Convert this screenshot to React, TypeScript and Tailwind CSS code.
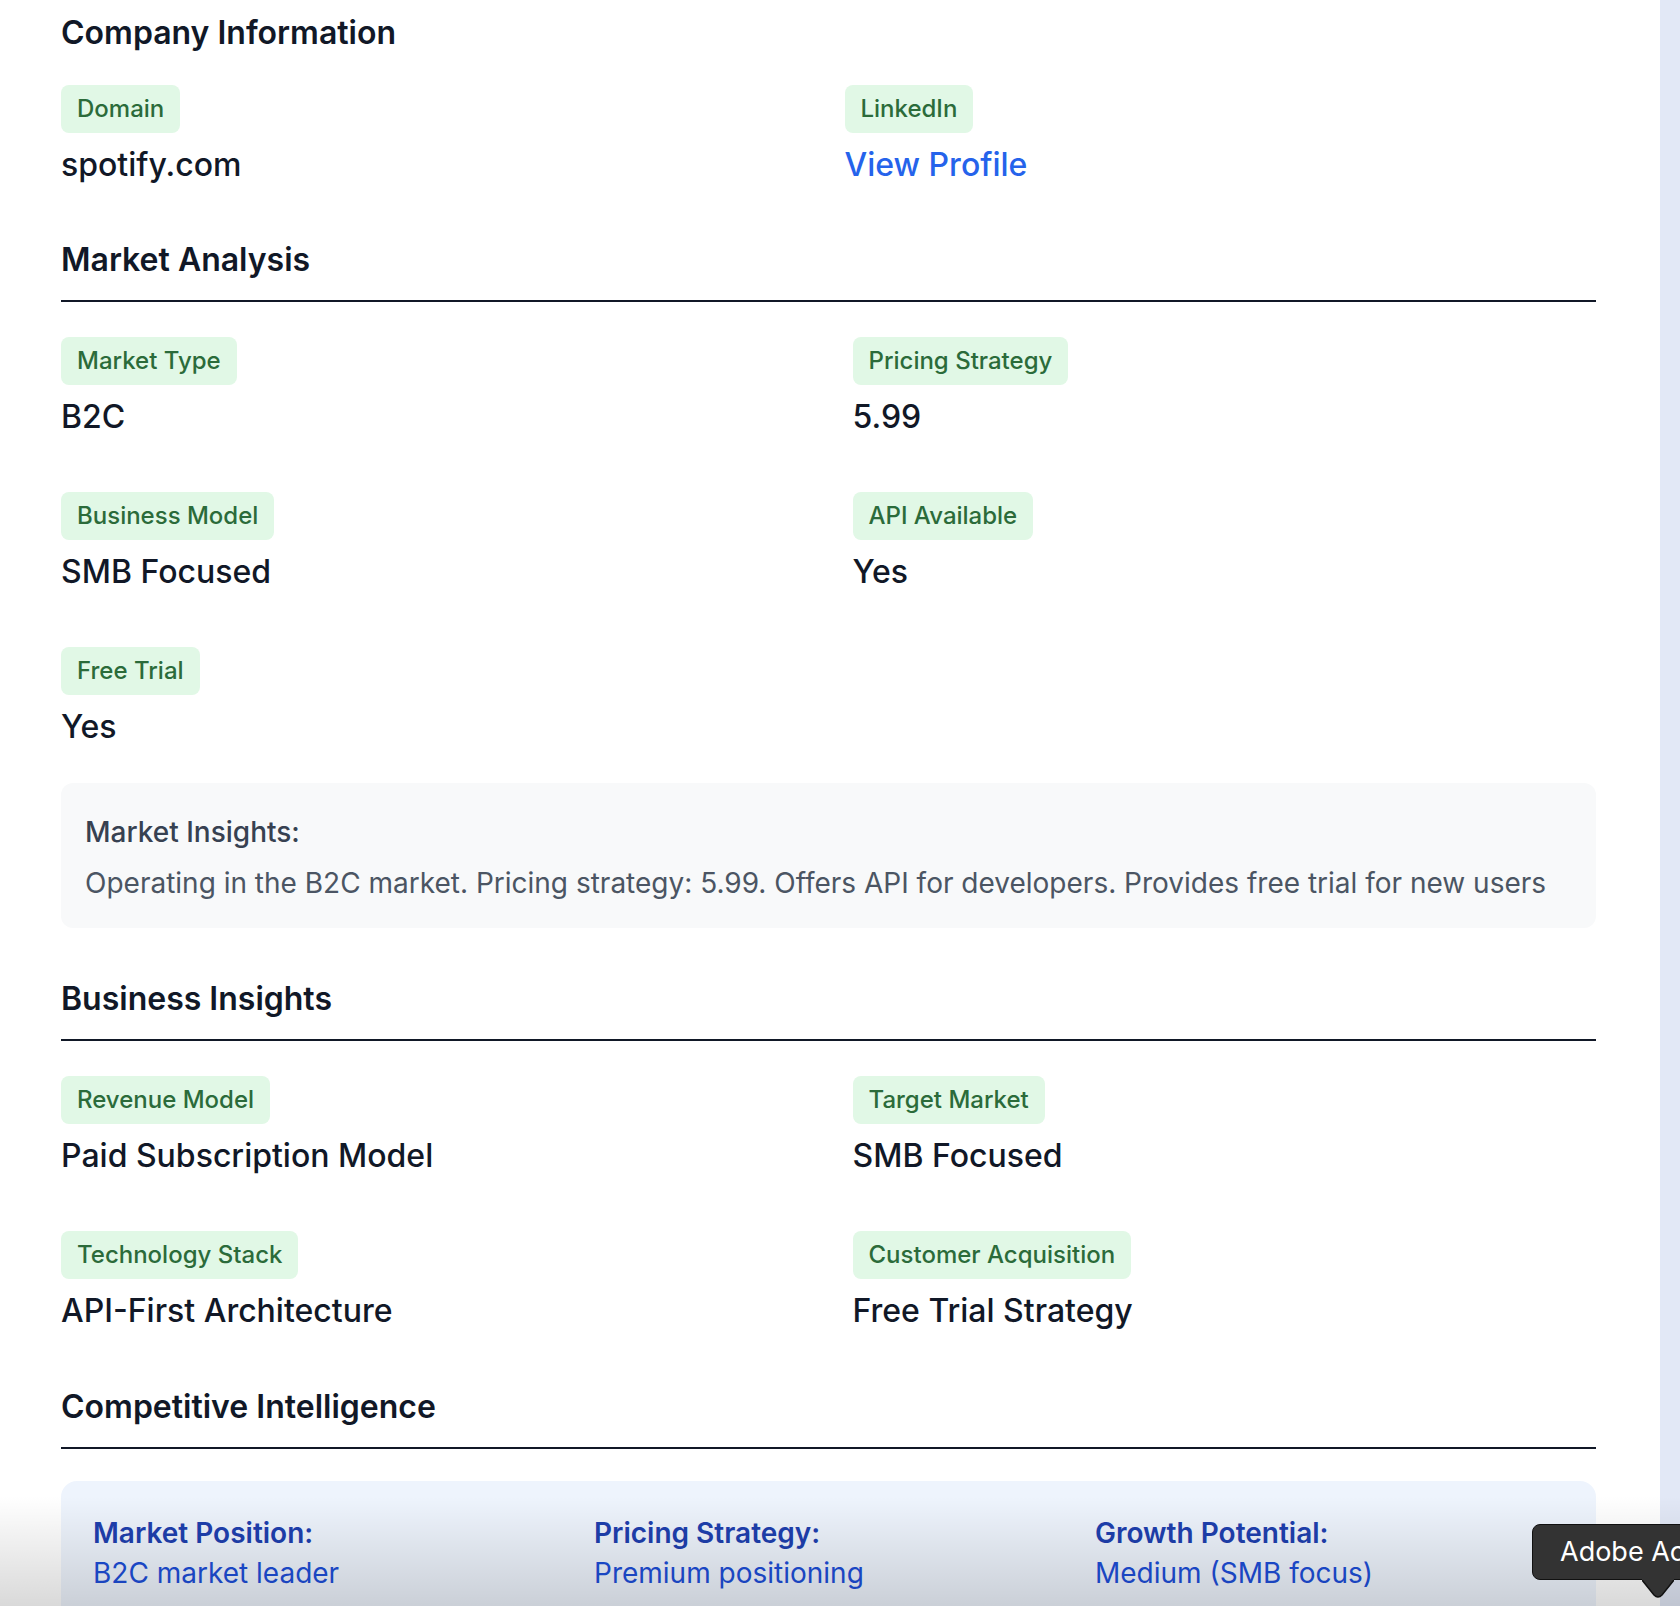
import React from "react";

function Badge({ children }: { children: React.ReactNode }) {
  return (
    <span className="inline-block rounded-lg bg-[#e1f8e6] px-4 py-2 text-[24px] leading-8 font-medium text-[#2b6b3a]">
      {children}
    </span>
  );
}

function Field({ label, value, link }: { label: string; value: string; link?: boolean }) {
  return (
    <div>
      <Badge>{label}</Badge>
      <div
        className={
          link
            ? "mt-[14px] text-[32px] leading-9 font-medium text-[#2563eb]"
            : "mt-[14px] text-[32px] leading-9 font-medium text-[#111827]"
        }
      >
        {value}
      </div>
    </div>
  );
}

function SectionHeading({ children, className }: { children: React.ReactNode; className: string }) {
  return (
    <div className={className}>
      <h2 className="border-b-2 border-[#111827] pb-5 text-[32px] leading-10 font-semibold text-[#111827]">
        {children}
      </h2>
    </div>
  );
}

export default function App() {
  return (
    <div className="relative flex h-[1606px] overflow-hidden bg-[#e2e8f6] font-['Inter',sans-serif]">
      <div className="w-[1660px] shrink-0 bg-white pt-[13px] pl-[61px] pr-[64px]">
        <h2 className="text-[32px] leading-10 font-semibold text-[#111827]">Company Information</h2>
        <div className="mt-8 grid grid-cols-2 gap-x-8">
          <Field label="Domain" value="spotify.com" />
          <Field label="LinkedIn" value="View Profile" link />
        </div>

        <SectionHeading className="mt-[57px]">Market Analysis</SectionHeading>
        <div className="mt-[35px] grid grid-cols-2 gap-x-12 gap-y-[57px]">
          <Field label="Market Type" value="B2C" />
          <Field label="Pricing Strategy" value="5.99" />
          <Field label="Business Model" value="SMB Focused" />
          <Field label="API Available" value="Yes" />
          <Field label="Free Trial" value="Yes" />
        </div>

        <div className="mt-[38px] rounded-xl bg-[#f8f9fa] px-6 pt-7 pb-6">
          <p className="mb-[9px] text-[28px] leading-[42px] font-medium text-[#374151]">Market Insights:</p>
          <p className="text-[28px] leading-[42px] text-[#4b5563]">
            Operating in the B2C market. Pricing strategy: 5.99. Offers API for developers. Provides free trial for new users
          </p>
        </div>

        <SectionHeading className="mt-[51px]">Business Insights</SectionHeading>
        <div className="mt-[35px] grid grid-cols-2 gap-x-12 gap-y-[57px]">
          <Field label="Revenue Model" value="Paid Subscription Model" />
          <Field label="Target Market" value="SMB Focused" />
          <Field label="Technology Stack" value="API-First Architecture" />
          <Field label="Customer Acquisition" value="Free Trial Strategy" />
        </div>

        <SectionHeading className="mt-[58px]">Competitive Intelligence</SectionHeading>
        <div className="mt-8 grid grid-cols-3 gap-8 rounded-2xl bg-[#eef4fd] p-8">
          <div>
            <p className="text-[28px] leading-10 font-semibold text-[#1e40af]">Market Position:</p>
            <p className="text-[28px] leading-10 text-[#1d4ed8]">B2C market leader</p>
          </div>
          <div>
            <p className="text-[28px] leading-10 font-semibold text-[#1e40af]">Pricing Strategy:</p>
            <p className="text-[28px] leading-10 text-[#1d4ed8]">Premium positioning</p>
          </div>
          <div>
            <p className="text-[28px] leading-10 font-semibold text-[#1e40af]">Growth Potential:</p>
            <p className="text-[28px] leading-10 text-[#1d4ed8]">Medium (SMB focus)</p>
          </div>
        </div>
      </div>
      <div className="flex-1" />

      <div className="pointer-events-none absolute inset-x-0 bottom-0 h-[110px] bg-gradient-to-b from-transparent to-[rgba(0,0,0,0.15)]" />

      <div className="absolute left-[1532px] top-[1524px]">
        <div className="relative rounded-lg border-[1.5px] border-[#111] bg-[#333333] pl-[27px] pr-6 py-[10px] text-[27px] leading-[34px] whitespace-nowrap text-white">
          Adobe Acrobat
        </div>
        <svg className="absolute left-[110px] top-[55px]" width="32" height="20" viewBox="0 0 32 20">
          <path d="M0 1 L12 16 Q16 20 20 16 L32 1" fill="#333333" stroke="#111" strokeWidth="1.5" />
          <rect x="0" y="-2" width="32" height="3" fill="#333333" />
        </svg>
      </div>
    </div>
  );
}
